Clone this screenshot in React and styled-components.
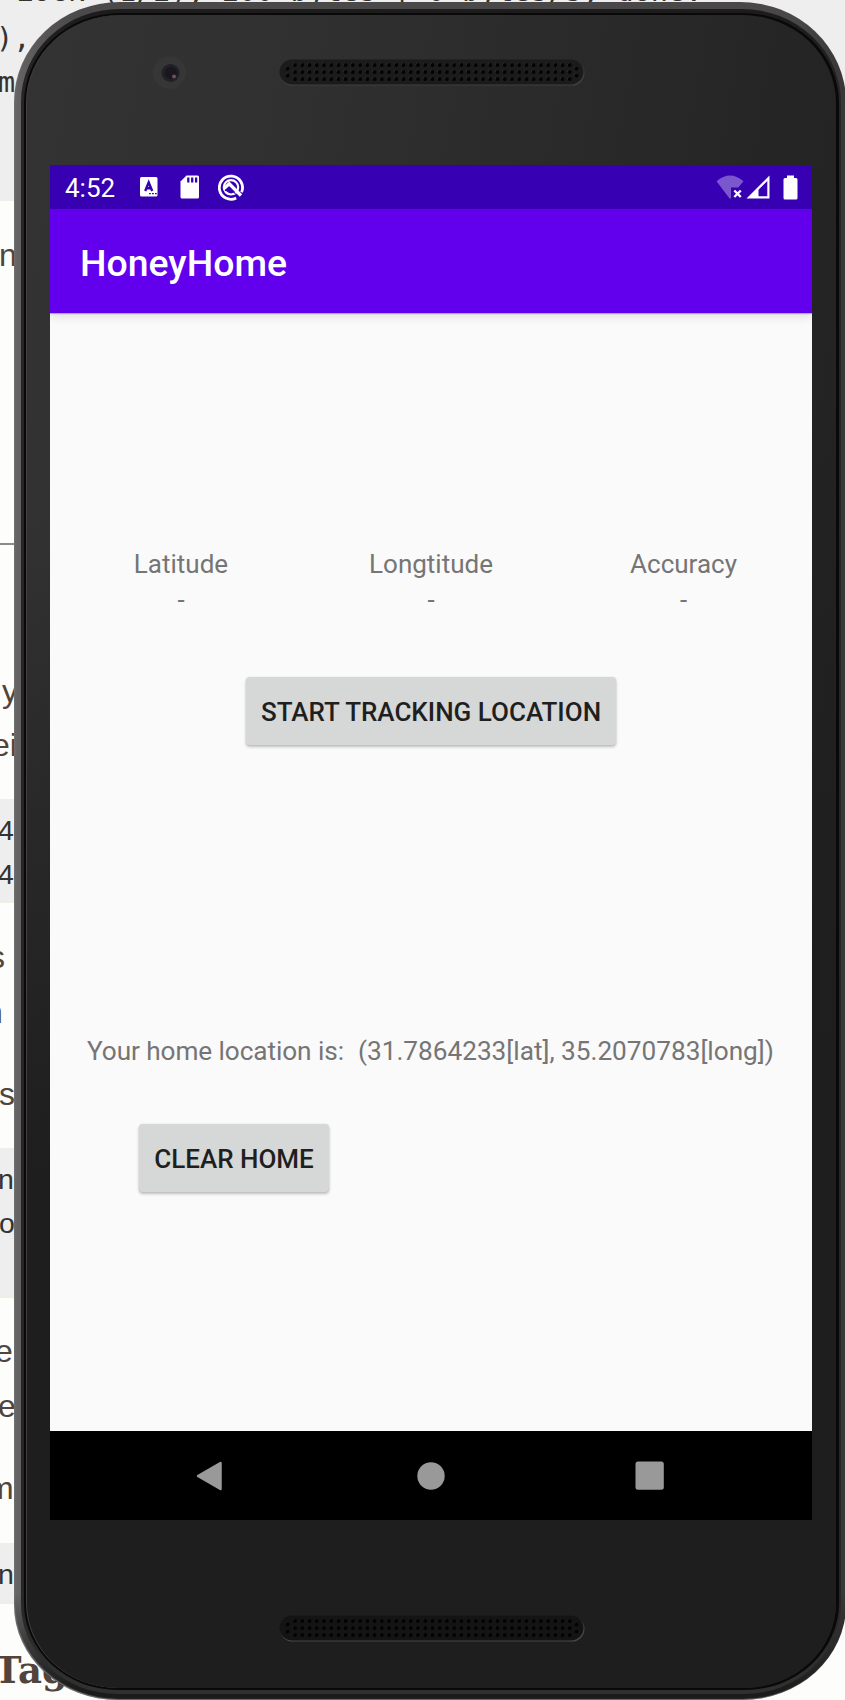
import React from "react";
import styled, { createGlobalStyle } from "styled-components";

const Global = createGlobalStyle`
  * { box-sizing: border-box; }
  html, body { margin: 0; padding: 0; }
  body { background: #fdfdfb; font-family: Roboto, "Liberation Sans", sans-serif; }
`;

const Stage = styled.main`
  position: relative;
  width: 845px;
  height: 1700px;
  overflow: hidden;
  background: #fdfdfb;
`;

/* Article behind the emulator window */
const Article = styled.div`
  display: flex;
  flex-direction: column;
`;

const Block = styled.div`
  display: flow-root;
  flex: none;
  height: ${(p) => p.$h}px;
  padding-top: ${(p) => p.$top || 0}px;
  background: ${(p) => (p.$code ? "#eeeeee" : "transparent")};
  border-bottom: ${(p) => (p.$code ? "2px solid #eeeee6" : "0")};
`;

const Line = styled.div`
  height: ${(p) => p.$h}px;
  line-height: ${(p) => p.$h}px;
  margin-left: ${(p) => p.$x}px;
  margin-top: ${(p) => p.$gap || 0}px;
  white-space: pre;
  font-family: ${(p) => (p.$mono ? '"DejaVu Sans Mono", monospace' : '"Liberation Sans", sans-serif')};
  font-size: ${(p) => p.$size || 32}px;
  color: ${(p) => (p.$mono || p.$dark ? "#333333" : "#51443c")};
`;

const Heading = styled(Line)`
  font-family: "DejaVu Serif", serif;
  font-weight: 700;
`;

const Rule = styled.hr`
  flex: none;
  width: 100%;
  height: 2px;
  margin: 0;
  border: 0;
  background: #8b8b8b;
`;

/* Device */
const Device = styled.section`
  position: absolute;
  left: 14px;
  top: 2px;
  width: 832px;
  height: 1698px;
  padding: 7px 5px 6px 7px;
  border-radius: 106px 106px 104px 104px / 100px 100px 95px 95px;
  background: linear-gradient(180deg, rgba(24, 24, 24, 0) 1590px, #1b1b1b 1690px),
    linear-gradient(90deg, #686667 0, #626061 7px, #4b494a 60px, #494748 780px, #3a3738 829px);
  box-shadow: inset 1px -1px 1px #707070;
  overflow: hidden;
`;

const Bezel = styled.div`
  height: 100%;
  padding: 4px 2px 4px 3px;
  border-radius: 99px 99px 97px 97px / 93px 93px 90px 90px;
  background: linear-gradient(180deg, #1c1c1c 0, #262626 80px, #262626 1580px, #303030 1670px);
`;

const Seam = styled.div`
  height: 100%;
  padding: 2px 3px 2px 2px;
  border-radius: 96px 96px 94px 94px / 90px 90px 87px 87px;
  background: #090909;
`;

const Face = styled.div`
  height: 100%;
  display: flex;
  flex-direction: column;
  border-radius: 94px 94px 92px 92px / 88px 88px 85px 85px;
  padding-left: 23px;
  border-left: 1px solid #414141;
  background: linear-gradient(172deg, rgba(30, 30, 30, 0) 0, rgba(30, 30, 30, 0) 28%, #1e1e1e 65%),
    linear-gradient(100deg, #333333 0, #303030 25%, #242424 75%, #1f1f1f 100%);
`;

const TopBezel = styled.div`
  flex: none;
  height: 150px;
  display: flex;
  align-items: flex-start;
  padding-top: 41px;
`;

const BottomBezel = styled.div`
  flex: none;
  padding: 95px 0 0 229px;
`;

const Camera = styled.div`
  width: 33px;
  height: 33px;
  margin-left: 103px;
  display: grid;
  place-items: center;
  border-radius: 50%;
  background: #363636;
`;

const Screen = styled.div`
  flex: none;
  width: 762px;
  height: 1355px;
  display: flex;
  flex-direction: column;
  background: #fafafa;
`;

const StatusBar = styled.header`
  height: 44px;
  flex: none;
  display: flex;
  align-items: center;
  background: #3700b3;
  color: #fff;
  padding: 0 14px 0 15px;
`;

const Clock = styled.span`
  width: 75px;
  font-size: 26px;
  line-height: 44px;
  padding-top: 2px;
`;

const Icon = styled.svg`
  display: block;
  flex: none;
  width: ${(p) => p.$w}px;
  height: ${(p) => p.$h}px;
  margin-left: ${(p) => p.$ml || 0}px;
  margin-top: ${(p) => p.$mt || 0}px;
`;

const Spacer = styled.span`
  flex: 1;
`;

const AppBar = styled.div`
  height: 104px;
  flex: none;
  position: relative;
  display: flex;
  align-items: center;
  padding: 4px 30px 0;
  background: #6200ee;
  box-shadow: 0 1px 1px rgba(0, 0, 0, 0.25), 0 3px 10px rgba(0, 0, 0, 0.12);
  clip-path: inset(0 0 -16px 0);
`;

const Title = styled.h1`
  margin: 0;
  font-size: 37.4px;
  line-height: 46px;
  font-weight: 500;
  color: #fff;
`;

const Content = styled.div`
  height: 1118px;
  flex: none;
  padding-top: 233px;
`;

const Readings = styled.div`
  display: grid;
  grid-template-columns: 262px 238px 262px;
  height: 131px;
`;

const Reading = styled.div`
  display: flex;
  flex-direction: column;
  align-items: center;
  padding-left: ${(p) => p.$l || 0}px;
  font-size: 26px;
  line-height: 36px;
  color: #757575;
`;

const Button = styled.button`
  display: block;
  width: ${(p) => p.$w}px;
  height: 68px;
  margin: 0 0 0 ${(p) => p.$x}px;
  padding: 2px 0 0;
  border: 0;
  border-radius: 4px;
  background: #d6d7d7;
  color: #1f1f1f;
  font: 500 26px/32px Roboto, sans-serif;
  white-space: nowrap;
  box-shadow: 0 2px 3px rgba(0, 0, 0, 0.24), 0 0 2px rgba(0, 0, 0, 0.1);
`;

const Home = styled.p`
  height: 95px;
  margin: 284px 0 0;
  padding-left: 37px;
  display: flex;
  font-size: 26.2px;
  line-height: 44px;
  color: #757575;
  white-space: pre;
`;

const HomeLabel = styled.span`
  width: 271px;
  letter-spacing: -0.08px;
`;

const NavBar = styled.nav`
  height: 89px;
  flex: none;
  display: flex;
  align-items: center;
  background: #000;
  padding-left: 145px;
`;

function Speaker({ lower }) {
  const dots = [];
  for (let c = 0; c < 39; c += 1) {
    const x = 16 + c * 7.23;
    [6, 13, 20].forEach((y) => dots.push([x, y]));
  }
  [9.5, 16.5].forEach((y) => dots.push([8.5, y], [297.5, y]));
  return (
    <Icon $w={306} $h={27} $ml={lower ? 0 : 93} $mt={lower ? 0 : 3} viewBox="0 0 306 27">
      <rect x="1" y="1.6" width="304.5" height="25" rx="12.5" fill={lower ? "#494949" : "#414141"} />
      <rect x="0.5" y="0.5" width="304" height="25" rx="12.5" fill={lower ? "#141414" : "#1b1b1b"} />
      {dots.map(([x, y], i) => (
        <g key={i}>
          <circle cx={x - 0.5} cy={y - 0.7} r="1.6" fill={lower ? "#252525" : "#424242"} />
          <circle cx={x} cy={y} r="1.9" fill="#030303" />
        </g>
      ))}
    </Icon>
  );
}

function Background() {
  return (
    <Article>
      <Block $h={201} $code>
        <Line $mono $h={44} $gap={-30} $x={16} $size={28.5}>{"Lock (1/2), 200 bytes | 0 bytes/s, done."}</Line>
        <Line $mono $h={44} $gap={3} $x={-4} $size={28.5}>),</Line>
        <Line $mono $h={44} $x={-2} $size={28.5}>m</Line>
      </Block>
      <Block $h={342} $top={32}>
        <Line $h={44} $x={-1}>n</Line>
      </Block>
      <Rule />
      <Block $h={254} $top={124}>
        <Line $h={44} $x={2}>y</Line>
        <Line $h={44} $gap={10} $x={-8}>ei</Line>
      </Block>
      <Block $h={104} $top={9} $code>
        <Line $dark $h={44} $x={-2} $size={28.5}>4</Line>
        <Line $dark $h={44} $x={-2} $size={28.5}>4</Line>
      </Block>
      <Block $h={245} $top={32}>
        <Line $h={44} $x={-11}>s</Line>
        <Line $h={44} $gap={11} $x={-15}>n</Line>
        <Line $h={44} $gap={38} $x={-1}>s</Line>
      </Block>
      <Block $h={150} $top={9} $code>
        <Line $dark $h={44} $x={-2} $size={28.5}>n</Line>
        <Line $dark $h={44} $x={-1} $size={28.5}>o</Line>
      </Block>
      <Block $h={245} $top={31}>
        <Line $h={44} $x={-5}>e</Line>
        <Line $h={44} $gap={11} $x={-2}>e</Line>
        <Line $h={44} $gap={38} $x={-13}>m</Line>
      </Block>
      <Block $h={61} $top={9} $code>
        <Line $dark $h={44} $x={-2} $size={28.5}>n</Line>
      </Block>
      <Block $h={96} $top={41}>
        <Heading $h={50} $x={-6} $size={37}>Tag</Heading>
      </Block>
    </Article>
  );
}

export default function App() {
  return (
    <Stage>
      <Global />
      <Background />
      <Device>
        <Bezel>
          <Seam>
            <Face>
              <TopBezel>
                <Camera>
                  <svg width="20" height="20" viewBox="0 0 20 20">
                    <circle cx="10.5" cy="10" r="9" fill="#211f27" />
                    <circle cx="11" cy="10" r="6" fill="#19161e" />
                    <circle cx="14" cy="13.5" r="2" fill="#70505a" />
                  </svg>
                </Camera>
                <Speaker />
              </TopBezel>
              <Screen>
                <StatusBar>
                  <Clock>4:52</Clock>
                  <Icon $w={18} $h={20} viewBox="0 0 18 20">
                    <rect width="17.5" height="19.5" rx="1.5" fill="#fff" />
                    <path d="M5.2 14 8.7 5.5 12.2 14M6.5 11.2h4.5" fill="none" stroke="#3700b3" strokeWidth="2.4" />
                    <path d="M9 16.7h1.8M12 16.7h1.8M15 16.7h1.8" stroke="#3700b3" strokeWidth="1.2" />
                  </Icon>
                  <Icon $w={19} $h={24} $ml={22} viewBox="0 0 19 24">
                    <path d="M6.5 0.5H17.5Q19 .5 19 2V22Q19 23.5 17.5 23.5H2Q.5 23.5.5 22V6.5Z" fill="#fff" />
                    <path d="M8.3 2.5v5M12.2 2.5v5M16.1 2.5v5" stroke="#3700b3" strokeWidth="2.3" />
                  </Icon>
                  <Icon $w={26} $h={27} $ml={19} viewBox="0 0 26 27">
                    <path d="M18.2 24A11.6 11.6 0 1 1 23.6 18.2" fill="none" stroke="#fff" strokeWidth="2.8" />
                    <circle cx="13" cy="13.3" r="7.2" fill="none" stroke="#fff" strokeWidth="2.2" />
                    <path d="M6.5 14 11.3 9.8 23 21.5" fill="none" stroke="#fff" strokeWidth="3.4" />
                    <path d="M7 16.8 11.5 13.6 17.5 19.8" fill="none" stroke="#3700b3" strokeWidth="1.1" />
                  </Icon>
                  <Spacer />
                  <Icon $w={28} $h={24} viewBox="0 0 28 24">
                    <path d="M.5 6.3Q14-5.5 27.5 6.3L22.3 12.5H15V22.7L14 24Z" fill="#fff" opacity=".34" />
                    <path d="m18.3 15.5 6.5 6.5m0-6.5L18.3 22" stroke="#fff" strokeWidth="2.4" />
                  </Icon>
                  <Icon $w={24} $h={24} $ml={2} viewBox="0 0 24 24">
                    <path fillRule="evenodd" d="M.5 23.5 23.5.5v23ZM12.5 14.8v6.5h8.8V6Z" fill="#fff" />
                  </Icon>
                  <Icon $w={15} $h={25} $ml={13} viewBox="0 0 15 25">
                    <path d="M4 .5h7V3h2Q14.5 3 14.5 4.5V23Q14.5 24.5 13 24.5H2Q.5 24.5.5 23V4.5Q.5 3 2 3H4Z" fill="#fff" />
                  </Icon>
                </StatusBar>
                <AppBar>
                  <Title>HoneyHome</Title>
                </AppBar>
                <Content>
                  <Readings>
                    <Reading><span>Latitude</span><span>-</span></Reading>
                    <Reading><span>Longtitude</span><span>-</span></Reading>
                    <Reading $l={5}><span>Accuracy</span><span>-</span></Reading>
                  </Readings>
                  <Button $w={370} $x={196}>START TRACKING LOCATION</Button>
                  <Home>
                    <HomeLabel>Your home location is:</HomeLabel>
                    <span>(31.7864233[lat], 35.2070783[long])</span>
                  </Home>
                  <Button $w={190} $x={89}>CLEAR HOME</Button>
                </Content>
                <NavBar>
                  <Icon $w={28} $h={30} viewBox="0 0 28 30">
                    <path d="M3 15 25.5 2v26Z" fill="#999" stroke="#999" strokeWidth="2.5" strokeLinejoin="round" />
                  </Icon>
                  <Icon $w={28} $h={28} $ml={194} viewBox="0 0 28 28">
                    <circle cx="14" cy="14" r="13.7" fill="#999" />
                  </Icon>
                  <Icon $w={29} $h={29} $ml={190} viewBox="0 0 29 29">
                    <rect x=".5" y=".5" width="28.3" height="28.3" rx="2.5" fill="#999" />
                  </Icon>
                </NavBar>
              </Screen>
              <BottomBezel>
                <Speaker lower />
              </BottomBezel>
            </Face>
          </Seam>
        </Bezel>
      </Device>
    </Stage>
  );
}
